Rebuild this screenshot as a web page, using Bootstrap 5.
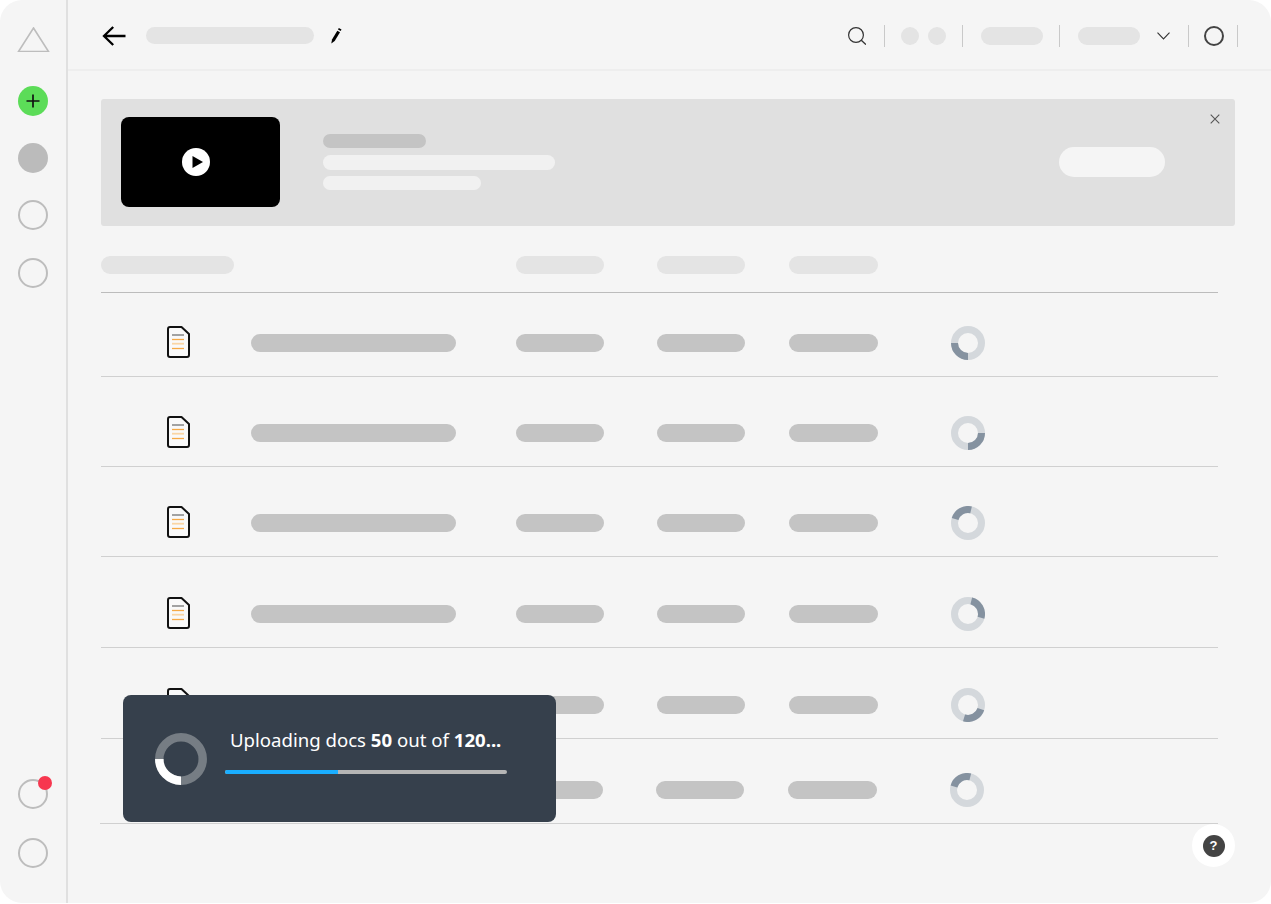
<!doctype html>
<html lang="en">
<head>
<meta charset="utf-8">
<title>Uploading docs</title>
<link href="https://cdn.jsdelivr.net/npm/bootstrap@5.3.0/dist/css/bootstrap.min.css" rel="stylesheet">
<style>
html,body{height:100%;}
body{background:#fff;font-family:"Noto Sans","Open Sans",sans-serif;overflow:hidden;}
.app-shell{width:1271px;height:903px;background:#f5f5f5;border-radius:22px;overflow:hidden;}
.side-rail{width:68px;flex:none;border-right:2px solid #e0e0e0;padding:27px 0 35px 0;}
.side-logo{display:block;margin-bottom:34px;}
.side-dot{width:30px;height:30px;border-radius:50%;border:2px solid #bdbdbd;flex:none;}
.side-gap{margin-bottom:27px;}
.side-gap-b{margin-bottom:28px;}
.side-gap-c{margin-bottom:29px;}
.side-add{background:#5cdc58;border:0;}
.side-fill{background:#bbb;border:0;}
.alert-dot{width:14px;height:14px;border-radius:50%;background:#f7374f;top:-5px;right:-6px;}
.top-bar{height:71px;border-bottom:2px solid #eee;padding:2px 33px 0 33px;flex:none;}
.sk{display:block;border-radius:50rem;flex:none;}
.sk-head{background:#e4e4e4;height:18px;}
.sk-row{background:#c4c4c4;height:18px;}
.top-title{width:168px;height:17px;margin-left:20px;}
.top-pencil{margin-left:16px;}
.top-search{margin-left:auto;}
.vsep{width:1px;height:22px;background:#c9c9c9;flex:none;}
.ml-18{margin-left:18px;}.ml-16{margin-left:16px;}.ml-17{margin-left:17px;}.ml-13{margin-left:13px;}.ml-9{margin-left:9px;}
.top-dot{width:18px;height:18px;border-radius:50%;background:#e4e4e4;flex:none;}
.top-pill{width:62px;height:18px;}
.top-ring{width:20px;height:20px;border-radius:50%;border:2px solid #444;flex:none;margin-left:15px;}
.page-body{padding:28px 36px 0 33px;}
.promo{height:127px;background:#e0e0e0;border-radius:3px;padding:0 0 1px 20px;}
.promo-video{width:159px;height:90px;background:#000;border-radius:8px;flex:none;}
.promo-play{margin-right:10px;}
.promo-text{margin-left:43px;}
.promo-a{width:103px;height:14px;background:#c4c4c4;}
.promo-b{width:232px;height:15px;background:#f1f1f1;margin-top:7px;}
.promo-c{width:158px;height:14px;background:#f1f1f1;margin-top:6px;}
.promo-cta{width:106px;height:30px;background:#f5f5f5;margin-left:auto;margin-right:70px;}
.promo-close{top:15px;right:15px;line-height:0;}
.doc-table{width:1117px;}
.doc-line{grid-template-columns:150px 265px 141px 132px 162px 1fr;align-items:center;padding-bottom:16px;border-bottom:1px solid #d0d0d0;align-content:end;}
.doc-head{height:67px;padding:30px 0 18px;border-bottom-color:#bcbcbc;}
.sk-first{width:133px;grid-column:span 2;}
.h-84{height:84px;}.h-90{height:90px;}.h-91{height:91px;}.h-85{height:85px;}
.shift-back{margin-left:-1px;}
.doc-icon{display:block;margin-left:66px;align-self:start;}
.sk-name{width:205px;}
.sk-a{width:88px;}
.sk-b{width:89px;}
.ring-box{display:block;}
.toast-box{left:123px;top:695px;width:433px;height:127px;background:#36404c;border-radius:8px;padding-left:32px;color:#fff;}
.toast-side{margin-left:18px;width:282px;align-self:flex-start;margin-top:33px;}
.toast-text{font-size:18.6px;line-height:24px;padding-left:5px;white-space:nowrap;}
.toast-track{height:4px;margin-top:18px;background:#b5b5b5;border-radius:2px;}
.toast-fill{background:#1aaeff;}
.help-btn{width:43px;height:43px;background:#fff;right:36px;top:824px;}
.help-mark{width:22px;height:22px;background:#444;color:#fff;font-size:13px;font-weight:700;line-height:22px;font-family:"Liberation Sans",sans-serif;}
</style>
</head>
<body>
<svg width="0" height="0" class="position-absolute">
  <symbol id="doc" viewBox="0 0 23 32">
    <path d="M3 1h11.500L22 8v21a2 2 0 0 1-2 2H3a2 2 0 0 1-2-2V3a2 2 0 0 1 2-2z" fill="#f9f9f9" stroke="#111" stroke-width="2" stroke-linejoin="round"/>
    <path d="M5 9h12" stroke="#858585" stroke-width="1.500"/>
    <path d="M5 13.500h12" stroke="#f6a945" stroke-width="1.300"/>
    <path d="M5 17.700h12" stroke="#fad5a4" stroke-width="1.800"/>
    <path d="M5 22.500h12" stroke="#f6a945" stroke-width="1.300"/>
  </symbol>
</svg>

<div class="app-shell d-flex position-relative">
  <aside class="side-rail d-flex flex-column align-items-center">
    <svg class="side-logo" width="33" height="25" viewBox="0 0 33 25"><path d="M16.500 1 31.500 24.500H1.500z" fill="none" stroke="#bdbdbd" stroke-width="1.600"/></svg>
    <div class="side-dot side-add side-gap d-flex align-items-center justify-content-center">
      <svg width="14" height="14" viewBox="0 0 14 14"><path d="M7 .5v13M.5 7h13" stroke="#111" stroke-width="1.700"/></svg>
    </div>
    <div class="side-dot side-fill side-gap"></div>
    <div class="side-dot side-gap-b"></div>
    <div class="side-dot"></div>
    <div class="side-dot position-relative mt-auto side-gap-c"><span class="alert-dot position-absolute"></span></div>
    <div class="side-dot"></div>
  </aside>

  <main class="flex-grow-1 d-flex flex-column">
    <header class="top-bar d-flex align-items-center">
      <svg width="25" height="20" viewBox="0 0 25 20"><path d="M24.500 10H3.500M12.200 1 3 10l9.200 9" fill="none" stroke="#000" stroke-width="2.300"/></svg>
      <span class="sk sk-head top-title"></span>
      <svg class="top-pencil" width="12" height="18" viewBox="0 0 12 18"><path d="M1.300 16.600 2 12.500 7.300 3.700 10 5.300 4.700 14.100z" fill="#000"/><path d="M8 2.400 8.800 1 11.500 2.600 10.700 4z" fill="#000"/></svg>
      <svg class="top-search" width="18" height="18" viewBox="0 0 18 18"><circle cx="8" cy="8" r="7.400" fill="none" stroke="#333" stroke-width="1.200"/><path d="M13.300 13.300 18 17.600" stroke="#333" stroke-width="1.400"/></svg>
      <span class="vsep ml-18"></span>
      <span class="top-dot ml-16"></span>
      <span class="top-dot ml-9"></span>
      <span class="vsep ml-16"></span>
      <span class="sk sk-head top-pill ml-18"></span>
      <span class="vsep ml-16"></span>
      <span class="sk sk-head top-pill ml-18"></span>
      <svg class="ml-17" width="13" height="8" viewBox="0 0 13 8"><path d="M.5.700 6.500 7 12.500.700" fill="none" stroke="#333" stroke-width="1.100"/></svg>
      <span class="vsep ml-18"></span>
      <span class="top-ring"></span>
      <span class="vsep ml-13"></span>
    </header>

    <div class="page-body flex-grow-1">
      <section class="promo d-flex align-items-center position-relative">
        <div class="promo-video d-flex align-items-center justify-content-center">
          <svg class="promo-play" width="28" height="28" viewBox="0 0 28 28"><circle cx="14" cy="14" r="14" fill="#fff"/><path d="M10.500 8 21 14 10.500 20z" fill="#000"/></svg>
        </div>
        <div class="promo-text">
          <span class="sk promo-a"></span>
          <span class="sk promo-b"></span>
          <span class="sk promo-c"></span>
        </div>
        <span class="sk promo-cta"></span>
        <span class="promo-close position-absolute"><svg width="10" height="10" viewBox="0 0 10 10"><path d="M.7.7l8.600 8.600M9.300.7.700 9.300" stroke="#555" stroke-width="1.100"/></svg></span>
      </section>

      <section class="doc-table">
        <div class="doc-line doc-head d-grid">
          <span class="sk sk-head sk-first"></span>
          <span class="sk sk-head sk-a"></span><span class="sk sk-head sk-a"></span><span class="sk sk-head sk-b"></span>
        </div>

        <div class="doc-line d-grid h-84">
          <svg class="doc-icon" width="23" height="32"><use href="#doc"/></svg>
          <span class="sk sk-row sk-name"></span><span class="sk sk-row sk-a"></span><span class="sk sk-row sk-a"></span><span class="sk sk-row sk-b"></span>
          <svg class="ring-box" width="34" height="34" viewBox="0 0 34 34"><circle cx="17" cy="17" r="13.500" fill="none" stroke="#d4d8dc" stroke-width="7"/><circle cx="17" cy="17" r="13.500" fill="none" stroke="#8592a0" stroke-width="7" pathLength="360" stroke-dasharray="90 360" transform="rotate(90 17 17)"/></svg>
        </div>
        <div class="doc-line d-grid h-90">
          <svg class="doc-icon" width="23" height="32"><use href="#doc"/></svg>
          <span class="sk sk-row sk-name"></span><span class="sk sk-row sk-a"></span><span class="sk sk-row sk-a"></span><span class="sk sk-row sk-b"></span>
          <svg class="ring-box" width="34" height="34" viewBox="0 0 34 34"><circle cx="17" cy="17" r="13.500" fill="none" stroke="#d4d8dc" stroke-width="7"/><circle cx="17" cy="17" r="13.500" fill="none" stroke="#8592a0" stroke-width="7" pathLength="360" stroke-dasharray="90 360" transform="rotate(0 17 17)"/></svg>
        </div>
        <div class="doc-line d-grid h-90">
          <svg class="doc-icon" width="23" height="32"><use href="#doc"/></svg>
          <span class="sk sk-row sk-name"></span><span class="sk sk-row sk-a"></span><span class="sk sk-row sk-a"></span><span class="sk sk-row sk-b"></span>
          <svg class="ring-box" width="34" height="34" viewBox="0 0 34 34"><circle cx="17" cy="17" r="13.500" fill="none" stroke="#d4d8dc" stroke-width="7"/><circle cx="17" cy="17" r="13.500" fill="none" stroke="#8592a0" stroke-width="7" pathLength="360" stroke-dasharray="86 360" transform="rotate(197 17 17)"/></svg>
        </div>
        <div class="doc-line d-grid h-91">
          <svg class="doc-icon" width="23" height="32"><use href="#doc"/></svg>
          <span class="sk sk-row sk-name"></span><span class="sk sk-row sk-a"></span><span class="sk sk-row sk-a"></span><span class="sk sk-row sk-b"></span>
          <svg class="ring-box" width="34" height="34" viewBox="0 0 34 34"><circle cx="17" cy="17" r="13.500" fill="none" stroke="#d4d8dc" stroke-width="7"/><circle cx="17" cy="17" r="13.500" fill="none" stroke="#8592a0" stroke-width="7" pathLength="360" stroke-dasharray="92 360" transform="rotate(-76 17 17)"/></svg>
        </div>
        <div class="doc-line d-grid h-91">
          <svg class="doc-icon" width="23" height="32"><use href="#doc"/></svg>
          <span class="sk sk-row sk-name"></span><span class="sk sk-row sk-a"></span><span class="sk sk-row sk-a"></span><span class="sk sk-row sk-b"></span>
          <svg class="ring-box" width="34" height="34" viewBox="0 0 34 34"><circle cx="17" cy="17" r="13.500" fill="none" stroke="#d4d8dc" stroke-width="7"/><circle cx="17" cy="17" r="13.500" fill="none" stroke="#8592a0" stroke-width="7" pathLength="360" stroke-dasharray="89 360" transform="rotate(18 17 17)"/></svg>
        </div>
        <div class="doc-line d-grid h-85 shift-back">
          <svg class="doc-icon" width="23" height="32"><use href="#doc"/></svg>
          <span class="sk sk-row sk-name"></span><span class="sk sk-row sk-a"></span><span class="sk sk-row sk-a"></span><span class="sk sk-row sk-b"></span>
          <svg class="ring-box" width="34" height="34" viewBox="0 0 34 34"><circle cx="17" cy="17" r="13.500" fill="none" stroke="#d4d8dc" stroke-width="7"/><circle cx="17" cy="17" r="13.500" fill="none" stroke="#8592a0" stroke-width="7" pathLength="360" stroke-dasharray="89 360" transform="rotate(195 17 17)"/></svg>
        </div>
      </section>
    </div>
  </main>

  <div class="toast-box position-absolute d-flex align-items-center">
    <svg width="52" height="52" viewBox="0 0 52 52"><circle cx="26" cy="26" r="21.700" fill="none" stroke="#767d84" stroke-width="8.500"/><circle cx="26" cy="26" r="21.700" fill="none" stroke="#fff" stroke-width="8.500" pathLength="360" stroke-dasharray="90 360" transform="rotate(90 26 26)"/></svg>
    <div class="toast-side">
      <div class="toast-text">Uploading docs <b>50</b> out of <b>120...</b></div>
      <div class="progress toast-track">
        <div class="progress-bar toast-fill" style="width:40%"></div>
      </div>
    </div>
  </div>

  <div class="help-btn position-absolute rounded-circle d-flex align-items-center justify-content-center">
    <span class="help-mark rounded-circle text-center">?</span>
  </div>
</div>

<script src="https://cdn.jsdelivr.net/npm/bootstrap@5.3.0/dist/js/bootstrap.bundle.min.js"></script>
</body>
</html>
